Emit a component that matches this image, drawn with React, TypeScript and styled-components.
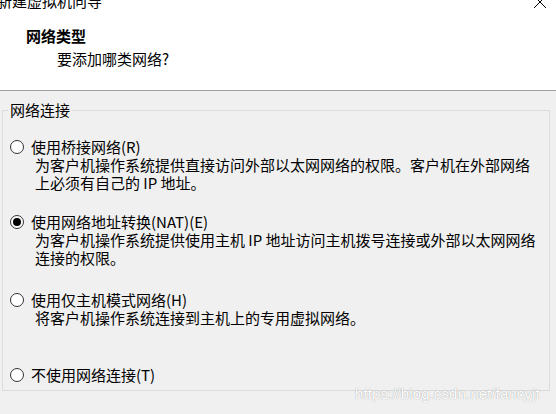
import React from "react";
import styled, { createGlobalStyle } from "styled-components";

const Global = createGlobalStyle`
  html, body { margin: 0; padding: 0; }
  body {
    width: 556px;
    height: 414px;
    overflow: hidden;
    background: #f0f0f0;
    font-family: "Noto Sans CJK SC", "Noto Sans", sans-serif;
    font-size: 15px;
    color: #000;
  }
`;

const Window = styled.div`
  position: relative;
  width: 556px;
  height: 414px;
  overflow: hidden;
  background: #f0f0f0;
`;

const Header = styled.header`
  background: #fff;
  border-bottom: 1px solid #a0a0a0;
  box-sizing: border-box;
  height: 91px;
  display: flex;
  flex-direction: column;
`;

const TitleBar = styled.div`
  height: 24px;
  display: flex;
  justify-content: space-between;
  align-items: flex-start;
`;

const TitleText = styled.span`
  margin: -8px 0 0 -3px;
  line-height: 18px;
`;

const CloseButton = styled.span`
  display: flex;
  margin: -5px 9px 0 0;
  width: 14px;
  height: 14px;
`;

const Heading = styled.div`
  margin: 3px 0 0 26px;
  font-weight: bold;
  line-height: 18px;
`;

const SubHeading = styled.div`
  margin: 5px 0 0 57px;
  line-height: 18px;
`;

const Main = styled.main`
  padding: 10px 6px 0 2px;
`;

const Group = styled.fieldset`
  margin: 0;
  padding: 19px 6px 0 5px;
  border: 1px solid #dcdcdc;
  height: 290px;
  box-sizing: border-box;
`;

const Legend = styled.legend`
  padding: 0 2px;
  line-height: 18px;
`;

const Option = styled.div<{ $after: number }>`
  display: flex;
  flex-direction: column;
  margin-bottom: ${(p) => p.$after}px;
`;

const OptionRow = styled.label`
  display: flex;
  align-items: center;
  line-height: 18px;
  gap: 7px;
  margin-left: 2px;
`;

const Radio = styled.span<{ $checked: boolean }>`
  flex: 0 0 auto;
  width: 14px;
  height: 14px;
  box-sizing: border-box;
  border: 1px solid #333;
  border-radius: 50%;
  background: #fff;
  display: flex;
  align-items: center;
  justify-content: center;
  &::after {
    content: "";
    display: ${(p) => (p.$checked ? "block" : "none")};
    width: 8px;
    height: 8px;
    border-radius: 50%;
    background: #000;
  }
`;

const Desc = styled.div`
  margin-left: 27px;
  line-height: 18px;
  white-space: pre-line;
`;

const Watermark = styled.div`
  position: absolute;
  left: 355px;
  top: 385px;
  font-family: "Liberation Sans", Arial, sans-serif;
  font-size: 15px;
  line-height: 18px;
  color: #ffffff;
  text-shadow: 0 0 1px rgba(110, 110, 110, 0.8);
  letter-spacing: 0.1px;
`;

const options = [
  {
    label: "使用桥接网络(R)",
    desc: "为客户机操作系统提供直接访问外部以太网网络的权限。客户机在外部网络\n上必须有自己的 IP 地址。",
    checked: false,
    after: 21,
  },
  {
    label: "使用网络地址转换(NAT)(E)",
    desc: "为客户机操作系统提供使用主机 IP 地址访问主机拨号连接或外部以太网网络\n连接的权限。",
    checked: true,
    after: 24,
  },
  {
    label: "使用仅主机模式网络(H)",
    desc: "将客户机操作系统连接到主机上的专用虚拟网络。",
    checked: false,
    after: 39,
  },
  { label: "不使用网络连接(T)", desc: "", checked: false, after: 0 },
];

export default function App() {
  return (
    <Window>
      <Global />
      <Header>
        <TitleBar>
          <TitleText>新建虚拟机向导</TitleText>
          <CloseButton>
            <svg width="14" height="14" viewBox="0 0 14 14">
              <path d="M1 1 L13 13 M13 1 L1 13" stroke="#000" strokeWidth="1" fill="none" />
            </svg>
          </CloseButton>
        </TitleBar>
        <Heading>网络类型</Heading>
        <SubHeading>要添加哪类网络?</SubHeading>
      </Header>
      <Main>
        <Group>
          <Legend>网络连接</Legend>
          {options.map((o) => (
            <Option key={o.label} $after={o.after}>
              <OptionRow>
                <Radio $checked={o.checked} />
                {o.label}
              </OptionRow>
              {o.desc && <Desc>{o.desc}</Desc>}
            </Option>
          ))}
        </Group>
      </Main>
      <Watermark>https://blog.csdn.net/fancyjt</Watermark>
    </Window>
  );
}
